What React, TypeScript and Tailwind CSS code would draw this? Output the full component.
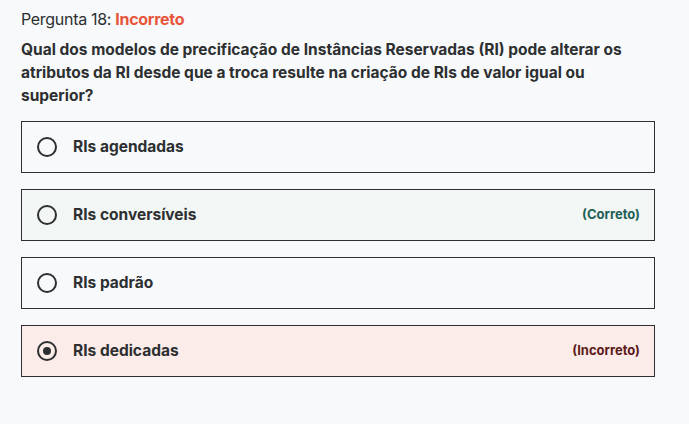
const options = [
  { label: "RIs agendadas", status: "none", selected: false },
  { label: "RIs conversíveis", status: "correct", selected: false },
  { label: "RIs padrão", status: "none", selected: false },
  { label: "RIs dedicadas", status: "incorrect", selected: true },
];

function Radio({ selected }: { selected: boolean }) {
  return (
    <span className="w-[20px] h-[20px] rounded-full border-2 border-[#2d2f31] flex items-center justify-center shrink-0">
      {selected && <span className="w-[8px] h-[8px] rounded-full bg-[#2d2f31]" />}
    </span>
  );
}

export default function App() {
  return (
    <div className="h-[424px] bg-[#f7f9fa] px-[21px] pt-[8px] text-[#2d2f31] font-['Inter',sans-serif]">
      <div className="text-[16px] leading-[22px] tracking-[-0.3px]">
        Pergunta 18: <span className="font-bold text-[#e8543a]">Incorreto</span>
      </div>
      <p className="mt-[8px] w-[625px] text-[15.5px] font-bold leading-[23px]">
        Qual dos modelos de precificação de Instâncias Reservadas (RI) pode alterar os
        atributos da RI desde que a troca resulte na criação de RIs de valor igual ou
        superior?
      </p>
      <div className="mt-[14px] w-[634px] flex flex-col gap-[16px]">
        {options.map((o) => (
          <div
            key={o.label}
            className={
              "h-[52px] border border-[#2d2f31] flex items-center pl-[15px] pr-[14px] " +
              (o.status === "correct"
                ? "bg-[#f2f6f5]"
                : o.status === "incorrect"
                ? "bg-[#fbece9]"
                : "bg-[#f7f9fa]")
            }
          >
            <Radio selected={o.selected} />
            <span className="ml-[16px] text-[15.5px] font-bold">{o.label}</span>
            {o.status === "correct" && (
              <span className="ml-auto text-[13px] font-bold text-[#1e6055]">(Correto)</span>
            )}
            {o.status === "incorrect" && (
              <span className="ml-auto text-[13px] font-bold text-[#5e1a1a]">(Incorreto)</span>
            )}
          </div>
        ))}
      </div>
    </div>
  );
}
